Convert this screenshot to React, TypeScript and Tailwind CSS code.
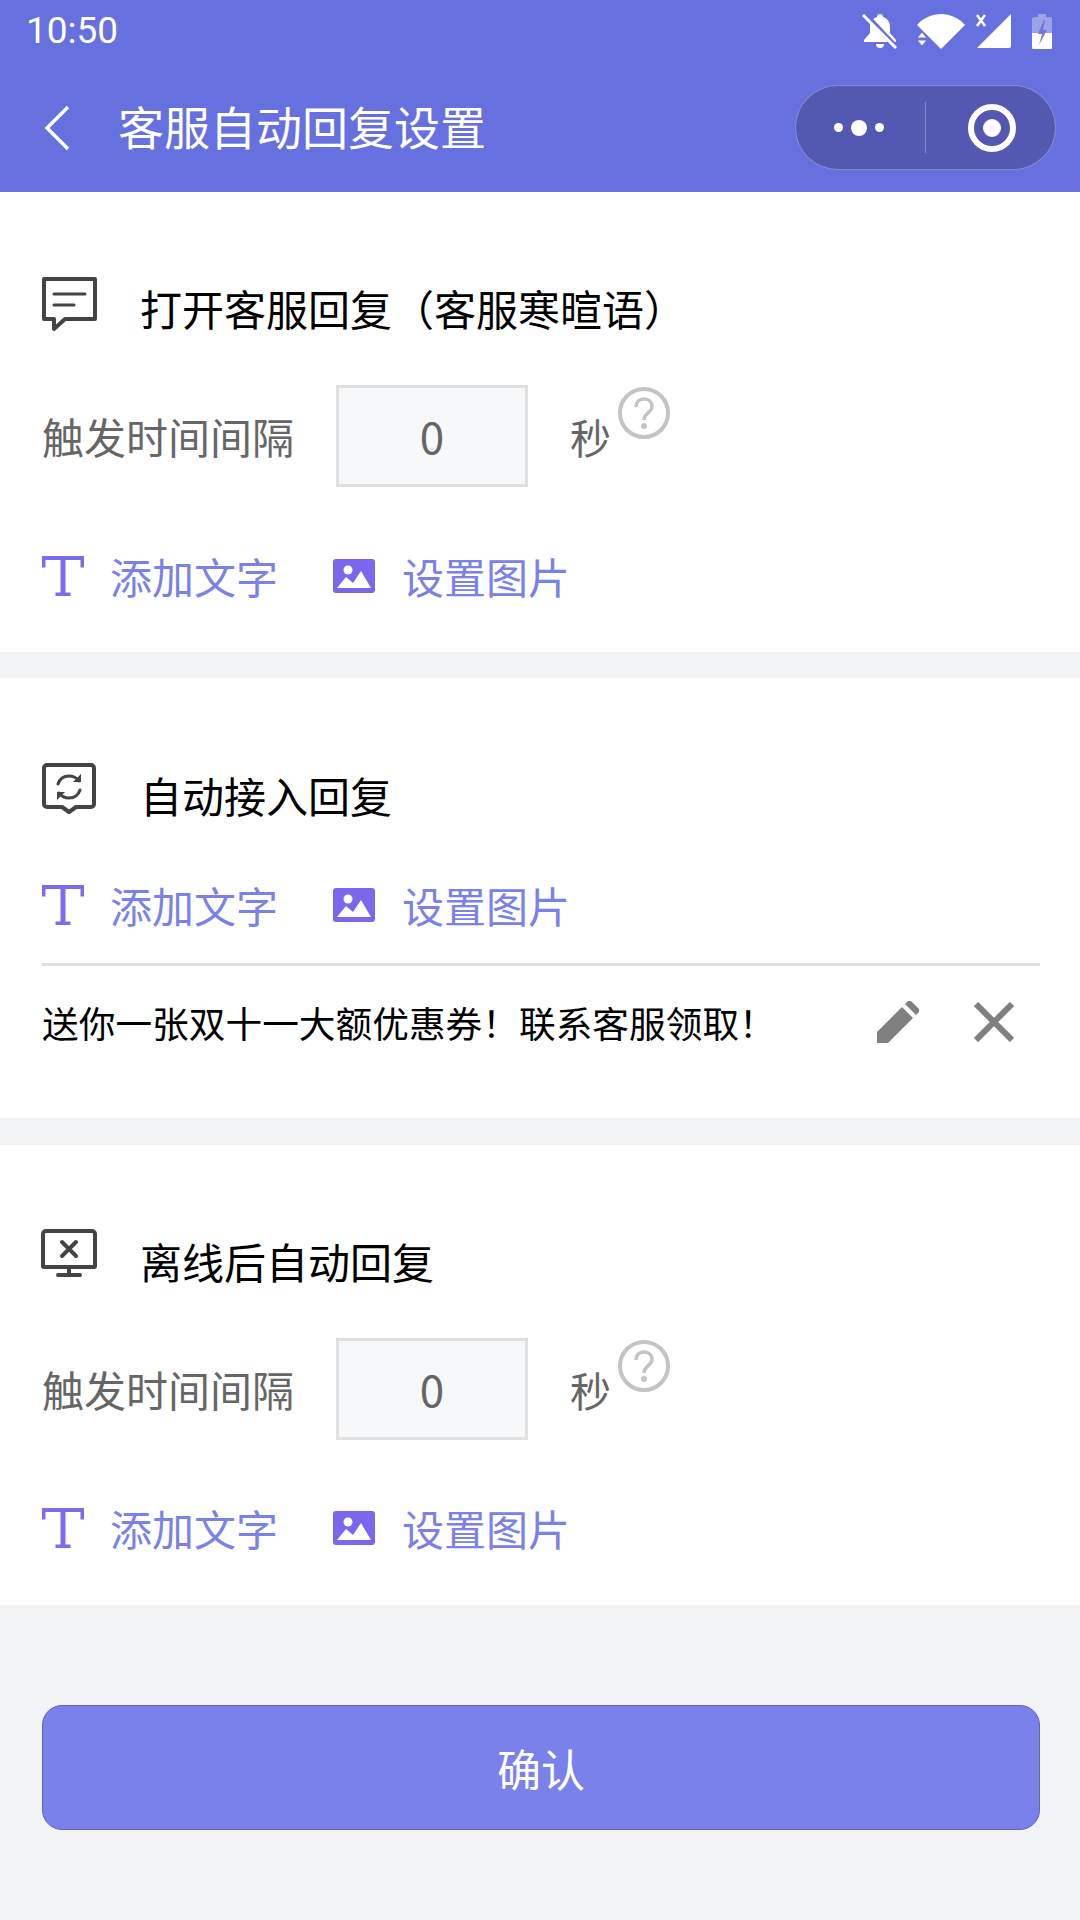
import React from 'react'

const cjk = "font-['Noto_Sans_CJK_SC','Noto_Sans',sans-serif]"

function StatusIcons() {
  return (
    <div className="flex items-start">
      <svg width="36" height="36" viewBox="0 0 36 36" className="mr-[19px]">
        <path d="M18 1c1.8 0 3 1.2 3 3 5 1.5 7 5.500 7 10v6l6 7v2H2v-2l6-7v-6c0-4.500 2-8.500 7-10 0-1.800 1.200-3 3-3z" fill="#fff" />
        <path d="M14 31h8a4 4 0 0 1-8 0z" fill="#fff" />
        <path d="M3 1l31 33" stroke="#6770df" strokeWidth="5" />
        <path d="M1 2l33 33" stroke="#fff" strokeWidth="3" />
      </svg>
      <svg width="48" height="36" viewBox="0 0 48 36" className="mr-[11px]">
        <path d="M0 12C6 5 15 1 24 1s18 4 24 11L24 36z" fill="#fff" />
        <path d="M0 25l5-6 5 6zM0 27l5 6 5-6z" fill="#fff" stroke="#6770df" strokeWidth="1" />
      </svg>
      <svg width="36" height="36" viewBox="0 0 36 36" className="mr-[20px]">
        <path d="M1 35L35 1v32a2 2 0 0 1-2 2z" fill="#fff" />
        <path d="M1 2l8 11M9 2L1 13" stroke="#fff" strokeWidth="2.500" />
      </svg>
      <svg width="20" height="36" viewBox="0 0 20 36">
        <path d="M6 1h8v3h4a2 2 0 0 1 2 2v14H0V6a2 2 0 0 1 2-2h4z" fill="#fff" fillOpacity="0.35" />
        <path d="M0 20h20v15a1 1 0 0 1-1 1H1a1 1 0 0 1-1-1z" fill="#fff" />
        <path d="M12 7L6 21h4l-3 11 8-15h-4l2-10z" fill="#6770df" fillOpacity="0.9" />
      </svg>
    </div>
  )
}

function Header() {
  return (
    <header className="h-[192px] bg-[#6770df] text-white">
      <div className="flex h-[60px] items-start justify-between pl-[26px] pr-[28px] pt-[13px]">
        <span className="font-['Roboto',sans-serif] text-[37px] leading-[36px]">10:50</span>
        <StatusIcons />
      </div>
      <div className="flex h-[85px] mt-[25px] items-center pl-[44px] pr-[24px]">
        <svg width="26" height="46" viewBox="0 0 26 46" fill="none" className="mr-[48px]">
          <path d="M24 2L3 23l21 21" stroke="#fff" strokeWidth="3.500" />
        </svg>
        <h1 className={`${cjk} mb-[6px] flex-1 text-[46px] leading-[60px] font-normal`}>客服自动回复设置</h1>
        <div className="flex h-[85px] w-[261px] items-center rounded-full border border-white/30 bg-[#5359b0]">
          <div className="flex w-[129px] items-center justify-center gap-[8px] pr-[3px]">
            <span className="h-[9px] w-[9px] rounded-full bg-white" />
            <span className="h-[16px] w-[16px] rounded-full bg-white" />
            <span className="h-[9px] w-[9px] rounded-full bg-white" />
          </div>
          <div className="h-[51px] w-px bg-white/30" />
          <div className="flex flex-1 items-center justify-center pl-[2px]">
            <div className="flex h-[48px] w-[48px] items-center justify-center rounded-full border-[6px] border-white">
              <span className="h-[18px] w-[18px] rounded-full bg-white" />
            </div>
          </div>
        </div>
      </div>
    </header>
  )
}

function ChatIcon() {
  return (
    <svg width="56" height="56" viewBox="0 0 56 56" fill="none" stroke="#444" strokeWidth="4" strokeLinejoin="round" strokeLinecap="round">
      <path d="M3 3h51v40H24L13 53V43H3z" />
      <path d="M13 18h31M13 29h20" strokeWidth="3" />
    </svg>
  )
}

function RefreshChatIcon() {
  return (
    <svg width="56" height="52" viewBox="0 0 56 52" fill="none" stroke="#444" strokeWidth="4" strokeLinejoin="round" strokeLinecap="round">
      <path d="M6 2h44a3 3 0 0 1 3 3v36a3 3 0 0 1-3 3H35l-7 5-7-5H6a3 3 0 0 1-3-3V5a3 3 0 0 1 3-3z" />
      <path d="M17 21c2-6 6-8 11-8 4 0 7 1 10 5M39 27c-2 6-6 8-11 8-4 0-7-1-10-5" strokeWidth="3" />
      <path d="M40 11v8h-8z" fill="#444" stroke="none" />
      <path d="M16 37v-8h8z" fill="#444" stroke="none" />
    </svg>
  )
}

function MonitorIcon() {
  return (
    <svg width="56" height="48" viewBox="0 0 56 48" fill="none" stroke="#444" strokeWidth="4" strokeLinejoin="round" strokeLinecap="round">
      <path d="M5 2h46a3 3 0 0 1 3 3v32a1 1 0 0 1-1 1H3a1 1 0 0 1-1-1V5a3 3 0 0 1 3-3z" />
      <path d="M21 13l14 14M35 13L21 27" />
      <path d="M28 38v8M17 46h22" />
    </svg>
  )
}

function HelpIcon() {
  return (
    <svg width="52" height="52" viewBox="0 0 52 52" fill="none" stroke="#c4c4c4">
      <circle cx="26" cy="26" r="24" strokeWidth="4" />
      <path d="M18 20c0-5 3.500-8 8-8s8 3 8 7.500c0 6-8 6.500-8 13.500" strokeWidth="3.500" />
      <circle cx="26" cy="39" r="3" fill="#c4c4c4" stroke="none" />
    </svg>
  )
}

function Interval() {
  return (
    <div className="flex items-start">
      <span className={`${cjk} mt-[21px] w-[294px] text-[42px] leading-[60px] text-[#666]`}>触发时间间隔</span>
      <div className="flex h-[102px] w-[192px] items-center justify-center border-[3px] border-[#e0e0e0] bg-[#f7f8fa]">
        <span className={`${cjk} mb-[2px] text-[44px] leading-[60px] text-[#666]`}>0</span>
      </div>
      <span className={`${cjk} ml-[42px] mt-[21px] text-[41px] leading-[60px] text-[#666]`}>秒</span>
      <div className="ml-[7px] mt-[2px]">
        <HelpIcon />
      </div>
    </div>
  )
}

function Actions() {
  return (
    <div className="flex h-[60px] items-center">
      <svg width="42" height="40" viewBox="0 0 42 40" className="mr-[26px] mb-[1px]" fill="#7c6cf0">
        <path d="M0 0h42v11.500h-3.500V4H23.500v32.500h5V40H13.500v-3.500h5V4H3.500v7.500H0z" />
      </svg>
      <span className={`${cjk} w-[165px] whitespace-nowrap text-[42px] leading-[60px] text-[#7a81e8]`}>添加文字</span>
      <svg width="42" height="34" viewBox="0 0 42 34" className="ml-[58px] mr-[27px]">
        <rect width="42" height="34" rx="3" fill="#7c66ee" />
        <circle cx="15" cy="11" r="4.500" fill="#fff" />
        <path d="M4 29l9-11 7 6 8-12 10 17z" fill="#fff" />
      </svg>
      <span className={`${cjk} whitespace-nowrap text-[42px] leading-[60px] text-[#7a81e8]`}>设置图片</span>
    </div>
  )
}

function Title({ icon, text }: { icon: React.ReactNode; text: string }) {
  return (
    <div className="flex items-start">
      <div className="-ml-[1px] w-[99px]">{icon}</div>
      <h2 className={`${cjk} mt-[2px] text-[42px] leading-[60px] font-normal text-black`}>{text}</h2>
    </div>
  )
}

export default function App() {
  return (
    <div className="flex h-[1920px] w-[1080px] flex-col overflow-hidden bg-[#f2f3f5]">
      <Header />

      <section className="h-[460px] bg-white pl-[42px] pr-[40px] pt-[84px]">
        <Title icon={<ChatIcon />} text="打开客服回复（客服寒暄语）" />
        <div className="mt-[47px]">
          <Interval />
        </div>
        <div className="mt-[59px]">
          <Actions />
        </div>
      </section>

      <section className="mt-[26px] h-[440px] bg-white pl-[42px] pr-[40px] pt-[85px]">
        <Title icon={<RefreshChatIcon />} text="自动接入回复" />
        <div className="mt-[50px]">
          <Actions />
        </div>
        <div className="mt-[28px] border-t-[3px] border-[#e0e0e0]" />
        <div className="mt-[26px] flex items-center justify-between">
          <span className={`${cjk} text-[36.700px] leading-[60px] text-black`}>送你一张双十一大额优惠券！联系客服领取！</span>
          <div className="flex items-center pr-[26px]">
            <svg width="42" height="42" viewBox="0 0 42 42" fill="#808080">
              <path d="M0 42V31L25 6l11 11-25 25z" />
              <path d="M28 3l3-3h3l8 8v3l-3 3z" />
            </svg>
            <svg width="40" height="40" viewBox="0 0 40 40" stroke="#808080" strokeWidth="6" className="ml-[55px]">
              <path d="M2 2l36 36M38 2L2 38" />
            </svg>
          </div>
        </div>
      </section>

      <section className="mt-[27px] h-[460px] bg-white pl-[42px] pr-[40px] pt-[84px]">
        <Title icon={<MonitorIcon />} text="离线后自动回复" />
        <div className="mt-[47px]">
          <Interval />
        </div>
        <div className="mt-[58px]">
          <Actions />
        </div>
      </section>

      <button className={`${cjk} ml-[42px] mr-[40px] mt-[100px] h-[125px] rounded-[20px] border border-[#6066b8] bg-[#7a81ea] text-[44px] text-white`}>
        确认
      </button>
    </div>
  )
}
